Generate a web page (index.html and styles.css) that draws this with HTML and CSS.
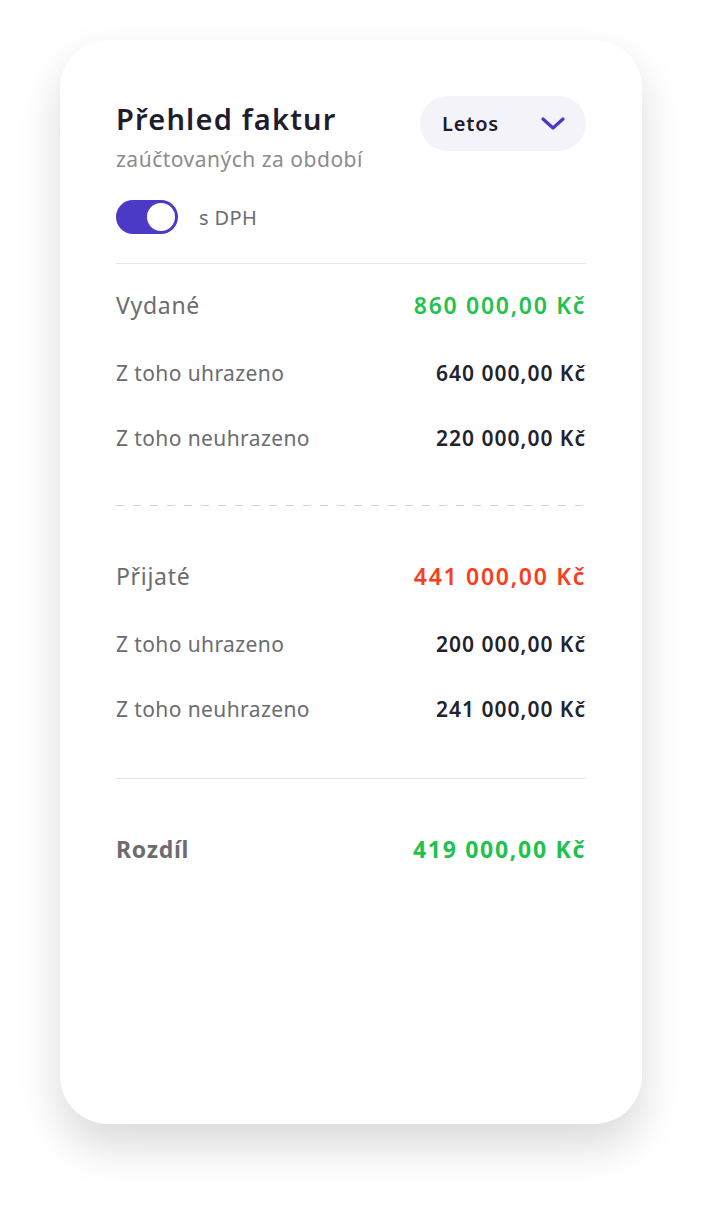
FILE: index.html
```html
<!DOCTYPE html>
<html lang="cs">
<head>
    <meta charset="UTF-8">
    <meta name="viewport" content="width=device-width, initial-scale=1.0">
    <title>Přehled faktur</title>
    <link rel="stylesheet" href="styles.css">
</head>
<body>
    <div class="card">
        <div class="header">
            <div class="titles">
                <h2 class="title">Přehled faktur</h2>
                <div class="subtitle">zaúčtovaných za období</div>
            </div>
            <button class="period">
                <span>Letos</span>
                <svg width="26" height="16" viewBox="0 0 26 16"><path d="M3 3 L13 12 L23 3" fill="none" stroke="#4a37c8" stroke-width="3.2" stroke-linecap="round" stroke-linejoin="round"/></svg>
            </button>
        </div>

        <label class="vat">
            <span class="switch"><span class="knob"></span></span>
            <span class="vat-text">s DPH</span>
        </label>

        <div class="section first">
            <div class="row main">
                <span class="label">Vydané</span>
                <span class="amount green">860 000,00 Kč</span>
            </div>
            <div class="row">
                <span class="label">Z toho uhrazeno</span>
                <span class="amount">640 000,00 Kč</span>
            </div>
            <div class="row">
                <span class="label">Z toho neuhrazeno</span>
                <span class="amount">220 000,00 Kč</span>
            </div>
        </div>

        <div class="section dashed">
            <div class="row main">
                <span class="label">Přijaté</span>
                <span class="amount red">441 000,00 Kč</span>
            </div>
            <div class="row">
                <span class="label">Z toho uhrazeno</span>
                <span class="amount">200 000,00 Kč</span>
            </div>
            <div class="row">
                <span class="label">Z toho neuhrazeno</span>
                <span class="amount">241 000,00 Kč</span>
            </div>
        </div>

        <div class="section total">
            <div class="row main">
                <span class="label">Rozdíl</span>
                <span class="amount green">419 000,00 Kč</span>
            </div>
        </div>
    </div>
</body>
</html>
```

FILE: styles.css
```css
body {
    font-family: "Noto Sans", "Open Sans", sans-serif;
    margin: 0;
    padding: 40px 0 81px 60px;
    background-color: #ffffff;
}
.card {
    width: 582px;
    height: 1084px;
    box-sizing: border-box;
    padding: 56px 56px;
    background: white;
    border-radius: 48px;
    box-shadow: 0px 22px 44px rgba(0, 0, 0, 0.15);
}
.header {
    display: flex;
    justify-content: space-between;
    align-items: flex-start;
}
.title {
    margin: 5px 0 0;
    font-size: 29px;
    line-height: 36px;
    font-weight: 600;
    letter-spacing: 1.2px;
    color: #1e1c2e;
}
.subtitle {
    margin-top: 9px;
    font-size: 21px;
    line-height: 26px;
    letter-spacing: 0.5px;
    color: #8c8c8c;
}
.period {
    display: flex;
    align-items: center;
    justify-content: space-between;
    width: 166px;
    height: 55px;
    padding: 0 20px 0 22px;
    border: none;
    border-radius: 28px;
    background-color: #f4f3fa;
    font-family: inherit;
    font-size: 20px;
    font-weight: 600;
    letter-spacing: 0.8px;
    color: #1e1c2e;
    cursor: pointer;
}
.vat {
    display: flex;
    align-items: center;
    gap: 21px;
    margin-top: 28px;
}
.switch {
    display: flex;
    justify-content: flex-end;
    align-items: center;
    width: 62px;
    height: 34px;
    box-sizing: border-box;
    padding: 3px;
    border-radius: 17px;
    background-color: #4b39c8;
}
.knob {
    width: 28px;
    height: 28px;
    border-radius: 50%;
    background: white;
}
.vat-text {
    font-size: 20px;
    letter-spacing: 0.4px;
    color: #6c6c70;
}
.section {
    padding: 56px 0 54px;
    border-top: 1px solid #e6e6e9;
}
.section.first {
    margin-top: 29px;
    padding-top: 26px;
    padding-bottom: 52px;
}
.section.dashed {
    border-top: none;
    background-image: linear-gradient(to right, #d3d3d6 50%, transparent 50%);
    background-size: 17px 1px;
    background-repeat: repeat-x;
    background-position: top left;
}
.section.total {
    padding-top: 55px;
}
.row {
    display: flex;
    justify-content: space-between;
    align-items: center;
    height: 30px;
    margin-top: 35px;
}
.row.main {
    margin-top: 0;
    margin-bottom: 38px;
}
.label {
    font-size: 21px;
    letter-spacing: 0.4px;
    color: #6c6c70;
}
.amount {
    font-size: 21px;
    font-weight: 600;
    letter-spacing: 1px;
    color: #23222f;
}
.main .label {
    font-size: 23px;
    letter-spacing: 0.7px;
}
.main .amount {
    font-size: 23px;
    letter-spacing: 1.7px;
}
.total .label {
    font-weight: 700;
}
.total .amount {
    font-weight: 700;
}
.green {
    color: #1fc24f !important;
}
.red {
    color: #ff3b1c !important;
}
```
